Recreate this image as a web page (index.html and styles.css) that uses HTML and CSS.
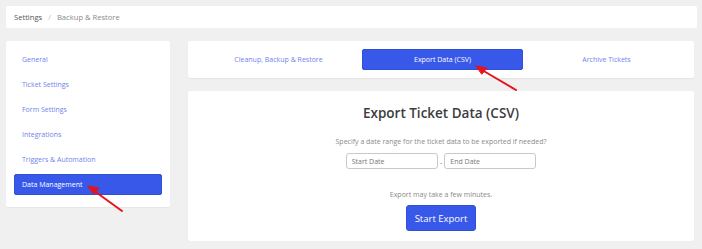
FILE: index.html
```html
<!DOCTYPE html>
<html lang="en">

<head>
    <meta charset="UTF-8">
    <meta name="viewport" content="width=device-width, initial-scale=1.0">
    <title>Settings - Backup &amp; Restore</title>
    <link rel="stylesheet" href="styles.css">
</head>

<body>
    <div class="page_wrap">
        <div class="breadcrumb">
            <span class="crumb">Settings</span>
            <span class="sep">/</span>
            <span class="crumb current">Backup &amp; Restore</span>
        </div>

        <div class="settings_row">
            <div class="side_menu">
                <a href="#" class="menu_item">General</a>
                <a href="#" class="menu_item">Ticket Settings</a>
                <a href="#" class="menu_item">Form Settings</a>
                <a href="#" class="menu_item">Integrations</a>
                <a href="#" class="menu_item">Triggers &amp; Automation</a>
                <a href="#" class="menu_item on">Data Management</a>
            </div>

            <div class="content_col">
                <div class="tab_bar">
                    <a href="#" class="tab">Cleanup, Backup &amp; Restore</a>
                    <a href="#" class="tab on">Export Data (CSV)</a>
                    <a href="#" class="tab">Archive Tickets</a>
                </div>

                <div class="export_card">
                    <h2 class="export_title">Export Ticket Data (CSV)</h2>
                    <p class="hint">Specify a date range for the ticket data to be exported if needed?</p>
                    <div class="date_range">
                        <input type="text" class="date_input" placeholder="Start Date">
                        <span class="dash">-</span>
                        <input type="text" class="date_input" placeholder="End Date">
                    </div>
                    <p class="hint note">Export may take a few minutes.</p>
                    <button class="start_btn">Start Export</button>
                </div>
            </div>
        </div>
    </div>

    <!-- 스크린샷 위의 빨간 화살표 표시 -->
    <svg class="annot" width="702" height="249" viewBox="0 0 702 249">
        <g stroke="#e8121a" stroke-width="2" fill="#e8121a" stroke-linecap="round">
            <line x1="122" y1="211" x2="93" y2="190" />
            <polygon points="88,186 99,188 94,194" stroke-width="1" stroke-linejoin="round" />
            <line x1="516" y1="90" x2="482" y2="70" />
            <polygon points="476,66 487,68 482,74" stroke-width="1" stroke-linejoin="round" />
        </g>
    </svg>
</body>

</html>
```

FILE: styles.css
```css
* {
    margin: 0;
    padding: 0;
    box-sizing: border-box;
}

body {
    font-family: "Open Sans", "Noto Sans", Arial, sans-serif;
    background: #f0f0f0;
    color: #333;
}

a {
    text-decoration: none;
}

.page_wrap {
    padding: 6px 5px 0 6px;
}

.breadcrumb {
    display: flex;
    align-items: center;
    gap: 6px;
    height: 22px;
    padding: 0 8px;
    background: #fff;
    border-radius: 2px;
    font-size: 7.6px;
    color: #777;
}

.breadcrumb .crumb {
    color: #555;
}

.breadcrumb .current {
    color: #8a8a8a;
}

.breadcrumb .sep {
    color: #bbb;
}

.settings_row {
    display: flex;
    gap: 18px;
    margin-top: 13px;
    padding-right: 3px;
    align-items: flex-start;
}

.side_menu {
    display: flex;
    flex-direction: column;
    gap: 4px;
    width: 164px;
    padding: 8px 8px 12px;
    background: #fff;
    border-radius: 2px;
    box-shadow: 0 1px 1px rgba(0, 0, 0, 0.04);
}

.menu_item {
    display: flex;
    align-items: center;
    height: 21px;
    padding-left: 8px;
    border-radius: 2px;
    font-size: 7px;
    color: #7183ea;
}

.menu_item.on {
    background: #3858e9;
    color: #fff;
    border: 1px solid #2f4fd8;
    padding-left: 7px;
}

.content_col {
    flex: 1;
    display: flex;
    flex-direction: column;
    gap: 13px;
}

.tab_bar {
    display: flex;
    gap: 4px;
    height: 37px;
    padding: 8px 8px 8px 11px;
    background: #fff;
    border-radius: 2px;
    box-shadow: 0 1px 1px rgba(0, 0, 0, 0.05);
}

.tab {
    flex: 1;
    display: flex;
    align-items: center;
    justify-content: center;
    border-radius: 2px;
    font-size: 7px;
    color: #7183ea;
}

.tab.on {
    background: #3858e9;
    color: #fff;
    border: 1px solid #2f4fd8;
}

.export_card {
    display: flex;
    flex-direction: column;
    align-items: center;
    height: 150px;
    padding-top: 12px;
    background: #fff;
    border-radius: 2px;
    box-shadow: 0 1px 1px rgba(0, 0, 0, 0.05);
}

.export_title {
    font-size: 13.5px;
    font-weight: 600;
    color: #3c3c3c;
    line-height: 20px;
}

.hint {
    margin-top: 14px;
    font-size: 7px;
    color: #8a8a8a;
    line-height: 10px;
}

.date_range {
    display: flex;
    align-items: center;
    gap: 2px;
    margin-top: 6px;
}

.date_input {
    width: 92px;
    height: 16px;
    padding: 0 5px;
    border: 1px solid #c9c9c9;
    border-radius: 3px;
    font-family: inherit;
    font-size: 7px;
    color: #555;
    background: #fff;
}

.date_input::placeholder {
    color: #777;
}

.dash {
    font-size: 8px;
    color: #888;
}

.note {
    margin-top: 21px;
}

.start_btn {
    margin-top: 5px;
    width: 70px;
    height: 26px;
    border: 1px solid #2f4fd8;
    border-radius: 3px;
    background: #3858e9;
    color: #fff;
    font-family: inherit;
    font-size: 9.5px;
    cursor: pointer;
}

.annot {
    position: absolute;
    top: 0;
    left: 0;
    pointer-events: none;
}
```
